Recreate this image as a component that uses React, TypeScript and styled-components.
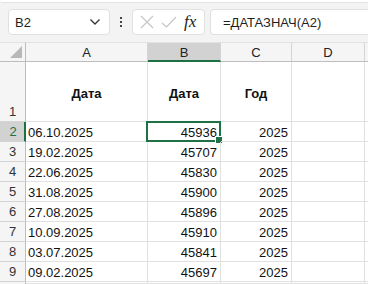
import React from 'react';
import styled, { createGlobalStyle } from 'styled-components';

const GREEN = '#1e7145';
const GRID = '#e1e1e1';
const HEAD_LINE = '#d4d4d4';

const GlobalStyle = createGlobalStyle`
  html, body {
    margin: 0;
    padding: 0;
    background: #ffffff;
    font-family: "Liberation Sans", Arial, sans-serif;
    overflow: hidden;
  }
  * { box-sizing: border-box; }
`;

// toolbar
const Toolbar = styled.div`
  height: 42px;
  background: #f3f3f3;
  position: relative;
  display: flex;
  align-items: flex-start;
  padding: 9px 0 0 8px;
`;

const RibbonEdge = styled.div`
  position: absolute;
  left: 0;
  top: 0;
  right: 0;
  height: 3px;
  background: #ffffff;
  border-bottom: 1px solid #e3e3e3;
  border-bottom-left-radius: 4px;
`;

const NameBox = styled.div`
  width: 102px;
  height: 26px;
  background: #ffffff;
  border: 1px solid #e0e0e0;
  border-radius: 4px;
  display: flex;
  align-items: center;
  justify-content: space-between;
  padding: 0 8px 0 6px;
  font-size: 13px;
  color: #1f1f1f;
`;

const Dots = styled.div`
  width: 22px;
  display: flex;
  flex-direction: column;
  align-items: center;
  gap: 2px;
  padding-top: 8px;

  span {
    width: 2px;
    height: 2px;
    background: #444;
  }
`;

const ButtonGroup = styled.div`
  width: 73px;
  height: 26px;
  background: #ffffff;
  border: 1px solid #e0e0e0;
  border-radius: 4px;
  display: flex;
  align-items: center;
  padding: 0 4px 0 6px;
  gap: 5px;
`;

const Fx = styled.span`
  font-family: "Liberation Serif", "Times New Roman", serif;
  font-style: italic;
  font-size: 17px;
  color: #222;
  margin-left: 1px;
`;

const FormulaInput = styled.div`
  flex: 1;
  height: 26px;
  margin-left: 5px;
  background: #ffffff;
  border: 1px solid #e0e0e0;
  border-right: none;
  border-radius: 4px 0 0 4px;
  display: flex;
  align-items: center;
  padding-left: 12px;
  font-size: 13px;
  color: #1f1f1f;
`;

// sheet
const Sheet = styled.div`
  display: grid;
  grid-template-columns: 26px 122px 73px 71px 73px 1fr;
  grid-template-rows: 20px 60px repeat(8, 20px) 2px;
`;

const Corner = styled.div`
  background: #f5f5f5;
  border-right: 1px solid #bdbdbd;
  border-bottom: 1px solid #bdbdbd;
  border-top: 1px solid #e3e3e3;
  position: relative;

  &::after {
    content: '';
    position: absolute;
    right: 3px;
    bottom: 3px;
    width: 0;
    height: 0;
    border-left: 12px solid transparent;
    border-bottom: 12px solid #b8b8b8;
  }
`;

const ColHead = styled.div<{ $selected?: boolean }>`
  background: ${p => (p.$selected ? '#d2d2d2' : '#f5f5f5')};
  border-top: 1px solid #e3e3e3;
  border-right: 1px solid ${HEAD_LINE};
  border-bottom: ${p => (p.$selected ? `2px solid ${GREEN}` : '1px solid #bdbdbd')};
  display: flex;
  align-items: center;
  justify-content: center;
  font-size: 13px;
  color: #222;
  padding-top: 1px;
`;

const RowHead = styled.div<{ $selected?: boolean }>`
  background: ${p => (p.$selected ? '#d2d2d2' : '#f5f5f5')};
  border-right: ${p => (p.$selected ? `2px solid ${GREEN}` : '1px solid #bdbdbd')};
  border-bottom: 1px solid ${HEAD_LINE};
  display: flex;
  align-items: flex-end;
  justify-content: center;
  padding-bottom: 2px;
  padding-left: ${p => (p.$selected ? '2px' : '0')};
  font-size: 13px;
  color: ${p => (p.$selected ? GREEN : '#333')};
`;

const Cell = styled.div<{ $align?: 'left' | 'right' | 'center'; $bold?: boolean }>`
  border-right: 1px solid ${GRID};
  border-bottom: 1px solid ${GRID};
  display: flex;
  align-items: ${p => (p.$bold ? 'center' : 'flex-end')};
  justify-content: ${p =>
    p.$align === 'right' ? 'flex-end' : p.$align === 'center' ? 'center' : 'flex-start'};
  padding: ${p => (p.$bold ? '4px 0 0 0' : '0 3px 1px 2px')};
  font-size: 13px;
  font-weight: ${p => (p.$bold ? 700 : 400)};
  color: #111;
  white-space: nowrap;
  position: relative;
`;

const Selection = styled.div`
  position: absolute;
  left: -2px;
  top: -1px;
  right: -1px;
  bottom: -1px;
  border: 2px solid ${GREEN};
  pointer-events: none;

  &::after {
    content: '';
    position: absolute;
    right: -4px;
    bottom: -4px;
    width: 6px;
    height: 6px;
    background: ${GREEN};
    border: 1px solid #fff;
  }
`;

const rows = [
  ['06.10.2025', '45936'],
  ['19.02.2025', '45707'],
  ['22.06.2025', '45830'],
  ['31.08.2025', '45900'],
  ['27.08.2025', '45896'],
  ['10.09.2025', '45910'],
  ['03.07.2025', '45841'],
  ['09.02.2025', '45697'],
];

function Chevron() {
  return (
    <svg width="12" height="8" viewBox="0 0 12 8" fill="none">
      <path d="M1.5 1.5 L6 6 L10.5 1.5" stroke="#333" strokeWidth="1.3" />
    </svg>
  );
}

function Cross() {
  return (
    <svg width="16" height="16" viewBox="0 0 16 16" fill="none">
      <path d="M2 2 L14 14 M14 2 L2 14" stroke="#c4c4c4" strokeWidth="1.1" />
    </svg>
  );
}

function Check() {
  return (
    <svg width="18" height="16" viewBox="0 0 18 16" fill="none">
      <path d="M2 9 L6.5 13 L16 3" stroke="#c4c4c4" strokeWidth="1.1" />
    </svg>
  );
}

export default function App() {
  return (
    <>
      <GlobalStyle />
      <Toolbar>
        <RibbonEdge />
        <NameBox>
          <span>B2</span>
          <Chevron />
        </NameBox>
        <Dots>
          <span />
          <span />
          <span />
        </Dots>
        <ButtonGroup>
          <Cross />
          <Check />
          <Fx>fx</Fx>
        </ButtonGroup>
        <FormulaInput>=ДАТАЗНАЧ(A2)</FormulaInput>
      </Toolbar>
      <Sheet>
        <Corner />
        <ColHead>A</ColHead>
        <ColHead $selected>B</ColHead>
        <ColHead>C</ColHead>
        <ColHead>D</ColHead>
        <ColHead />

        <RowHead>1</RowHead>
        <Cell $align="center" $bold>Дата</Cell>
        <Cell $align="center" $bold>Дата</Cell>
        <Cell $align="center" $bold>Год</Cell>
        <Cell />
        <Cell />

        {rows.map(([date, serial], i) => (
          <React.Fragment key={date}>
            <RowHead $selected={i === 0}>{i + 2}</RowHead>
            <Cell>{date}</Cell>
            <Cell $align="right">
              {serial}
              {i === 0 && <Selection />}
            </Cell>
            <Cell $align="right">2025</Cell>
            <Cell />
            <Cell />
          </React.Fragment>
        ))}

        <RowHead />
        <Cell />
        <Cell />
        <Cell />
        <Cell />
        <Cell />
      </Sheet>
    </>
  );
}
